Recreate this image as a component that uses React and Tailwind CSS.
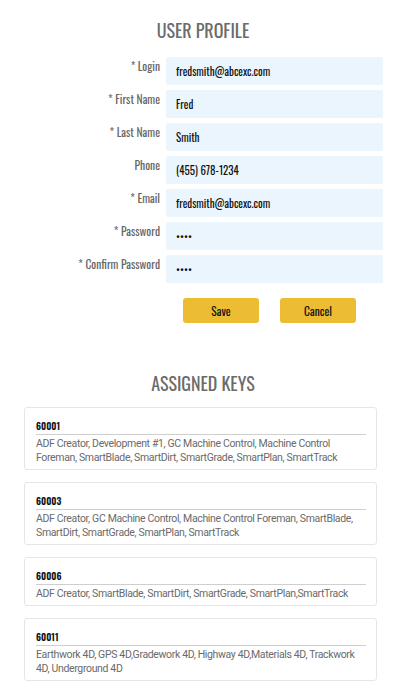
import React from 'react';

const fields = [
  { label: '* Login', value: 'fredsmith@abcexc.com' },
  { label: '* First Name', value: 'Fred' },
  { label: '* Last Name', value: 'Smith' },
  { label: 'Phone', value: '(455) 678-1234' },
  { label: '* Email', value: 'fredsmith@abcexc.com' },
  { label: '* Password', value: '••••' },
  { label: '* Confirm Password', value: '••••' },
];

const keys = [
  { id: '60001', apps: 'ADF Creator, Development #1, GC Machine Control, Machine Control Foreman, SmartBlade, SmartDirt, SmartGrade, SmartPlan, SmartTrack' },
  { id: '60003', apps: 'ADF Creator, GC Machine Control, Machine Control Foreman, SmartBlade, SmartDirt, SmartGrade, SmartPlan, SmartTrack' },
  { id: '60006', apps: 'ADF Creator, SmartBlade, SmartDirt, SmartGrade, SmartPlan,SmartTrack' },
  { id: '60011', apps: 'Earthwork 4D, GPS 4D,Gradework 4D, Highway 4D,Materials 4D, Trackwork 4D, Underground 4D' },
];

export default function App() {
  return (
    <div className="w-[400px] min-h-[688px] bg-white overflow-hidden font-['Oswald','DejaVu_Sans_Condensed',sans-serif] font-stretch-condensed">
      {/* User profile form */}
      <h2 className="pt-[16px] pl-[6px] text-center text-[18px] leading-[28px] font-normal text-[#6b6b6b] uppercase">
        User Profile
      </h2>

      <div className="mt-[13px] flex flex-col gap-[5px]">
        {fields.map((f, i) => (
          <div key={i} className="flex items-start">
            <label className="w-[160px] pt-[2px] text-right text-[11.5px] leading-[14px] text-[#666]">
              {f.label}
            </label>
            <div className="ml-[6px] w-[217px] h-[28px] bg-[#eaf5fd] rounded-[2px] pl-[10px] flex items-center text-[11px] font-normal text-[#111]">
              {f.value}
            </div>
          </div>
        ))}
      </div>

      <div className="mt-[15px] ml-[183px] flex gap-[21px]">
        <button className="w-[76px] h-[25px] rounded-[3px] bg-[#ecbd33] text-[11.5px] font-normal text-[#111]">Save</button>
        <button className="w-[76px] h-[25px] rounded-[3px] bg-[#ecbd33] text-[11.5px] font-normal text-[#111]">Cancel</button>
      </div>

      {/* Assigned keys */}
      <h2 className="mt-[46px] pl-[6px] text-center text-[18px] leading-[28px] font-normal text-[#6b6b6b] uppercase">
        Assigned Keys
      </h2>

      <div className="mt-[10px] ml-[24px] w-[353px] flex flex-col gap-[12px]">
        {keys.map((k) => (
          <div key={k.id} className="border border-[#e6e6e6] rounded-[3px] pl-[11px] pr-[10px] pt-[12px] pb-[4px]">
            <div className="text-[9.5px] leading-[12px] font-semibold text-[#111] pb-[2px] border-b border-[#cfcfcf]">
              {k.id}
            </div>
            <p className="pt-[2px] font-['Roboto','Noto_Sans',sans-serif] font-stretch-normal text-[10.5px] leading-[14px] tracking-[-0.35px] text-[#6a6a6a]">
              {k.apps}
            </p>
          </div>
        ))}
      </div>
    </div>
  );
}
